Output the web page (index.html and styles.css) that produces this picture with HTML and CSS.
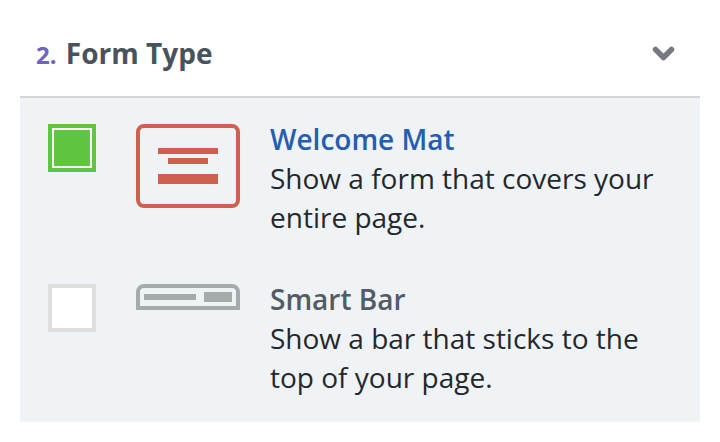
FILE: index.html
```html
<!DOCTYPE html>
<html lang="en">
<head>
<meta charset="utf-8">
<title>Form Type</title>
<link rel="stylesheet" href="styles.css">
</head>
<body>
<section class="panel">
  <header class="panel-head">
    <h2 class="panel-title"><span class="step">2.</span> Form Type</h2>
    <svg class="chevron" width="24" height="16" viewBox="0 0 24 16" aria-hidden="true"><path d="M3.500 3.500 11.500 11.500l8-8" fill="none" stroke="#747a80" stroke-width="5.500" stroke-linecap="round" stroke-linejoin="round"/></svg>
  </header>
  <div class="panel-body">
    <div class="option">
      <span class="check check-on"><span class="check-fill"></span></span>
      <span class="thumb thumb-mat">
        <span class="mat-bar mat-long"></span>
        <span class="mat-bar mat-short"></span>
        <span class="mat-bar mat-thick"></span>
      </span>
      <div class="copy">
        <div class="name name-on">Welcome Mat</div>
        <div class="desc">Show a form that covers your entire page.</div>
      </div>
    </div>
    <div class="option">
      <span class="check"></span>
      <span class="thumb thumb-bar">
        <span class="bar-line"></span>
        <span class="bar-btn"></span>
      </span>
      <div class="copy">
        <div class="name">Smart Bar</div>
        <div class="desc">Show a bar that sticks to the top of your page.</div>
      </div>
    </div>
  </div>
</section>
</body>
</html>
```
FILE: styles.css
```css
* { box-sizing: border-box; }
html, body { margin: 0; background: #fff; }
body { padding: 0 20px; font-family: "Open Sans", sans-serif; width: 720px; height: 442px; overflow: hidden; }
.panel { width: 680px; }
.panel-head {
  height: 98px;
  padding: 12px 24px 0 16px;
  display: flex;
  align-items: center;
  justify-content: space-between;
  border-bottom: 2px solid #d3d6d9;
}
.panel-title { margin: 0; font-size: 28px; font-weight: 700; color: #49535b; line-height: 36px; }
.step { font-size: 24px; color: #6f63bd; margin-right: 2px; }
.chevron { display: block; }
.panel-body {
  background: #eff3f6;
  height: 324px;
  padding: 26px 28px 0;
  display: flex;
  flex-direction: column;
  gap: 36px;
}
.option { display: flex; align-items: flex-start; height: 124px; }
.check {
  flex: none;
  width: 48px;
  height: 48px;
  border: 4px solid #dfdfdf;
  background: #fff;
  margin-right: 40px;
}
.check-on { border-color: #60c642; padding: 2px; }
.check-fill { display: block; height: 100%; background: #60c642; }
.thumb { flex: none; width: 104px; display: flex; margin-right: 30px; border-style: solid; border-width: 4px; }
.thumb-mat {
  height: 84px;
  border-color: #cf604d;
  border-radius: 8px;
  flex-direction: column;
  align-items: center;
  padding-top: 20px;
}
.mat-bar { display: block; background: #cf604d; width: 60px; }
.mat-long { height: 6px; }
.mat-short { height: 6px; width: 40px; margin-top: 4px; }
.mat-thick { height: 10px; margin-top: 10px; }
.thumb-bar {
  height: 26px;
  border-color: #a5aaad;
  border-radius: 8px 8px 0 0;
  align-items: center;
  padding-left: 4px;
}
.bar-line { width: 52px; height: 6px; background: #a5aaad; }
.bar-btn { width: 28px; height: 10px; background: #a5aaad; margin-left: 8px; }
.copy { flex: 1; min-width: 0; margin-top: -3px; }
.name { font-size: 28px; font-weight: 600; line-height: 36px; color: #525c64; margin-bottom: 2px; }
.name-on { color: #275db0; }
.desc { font-size: 28px; line-height: 39px; color: #23282d; }
```
